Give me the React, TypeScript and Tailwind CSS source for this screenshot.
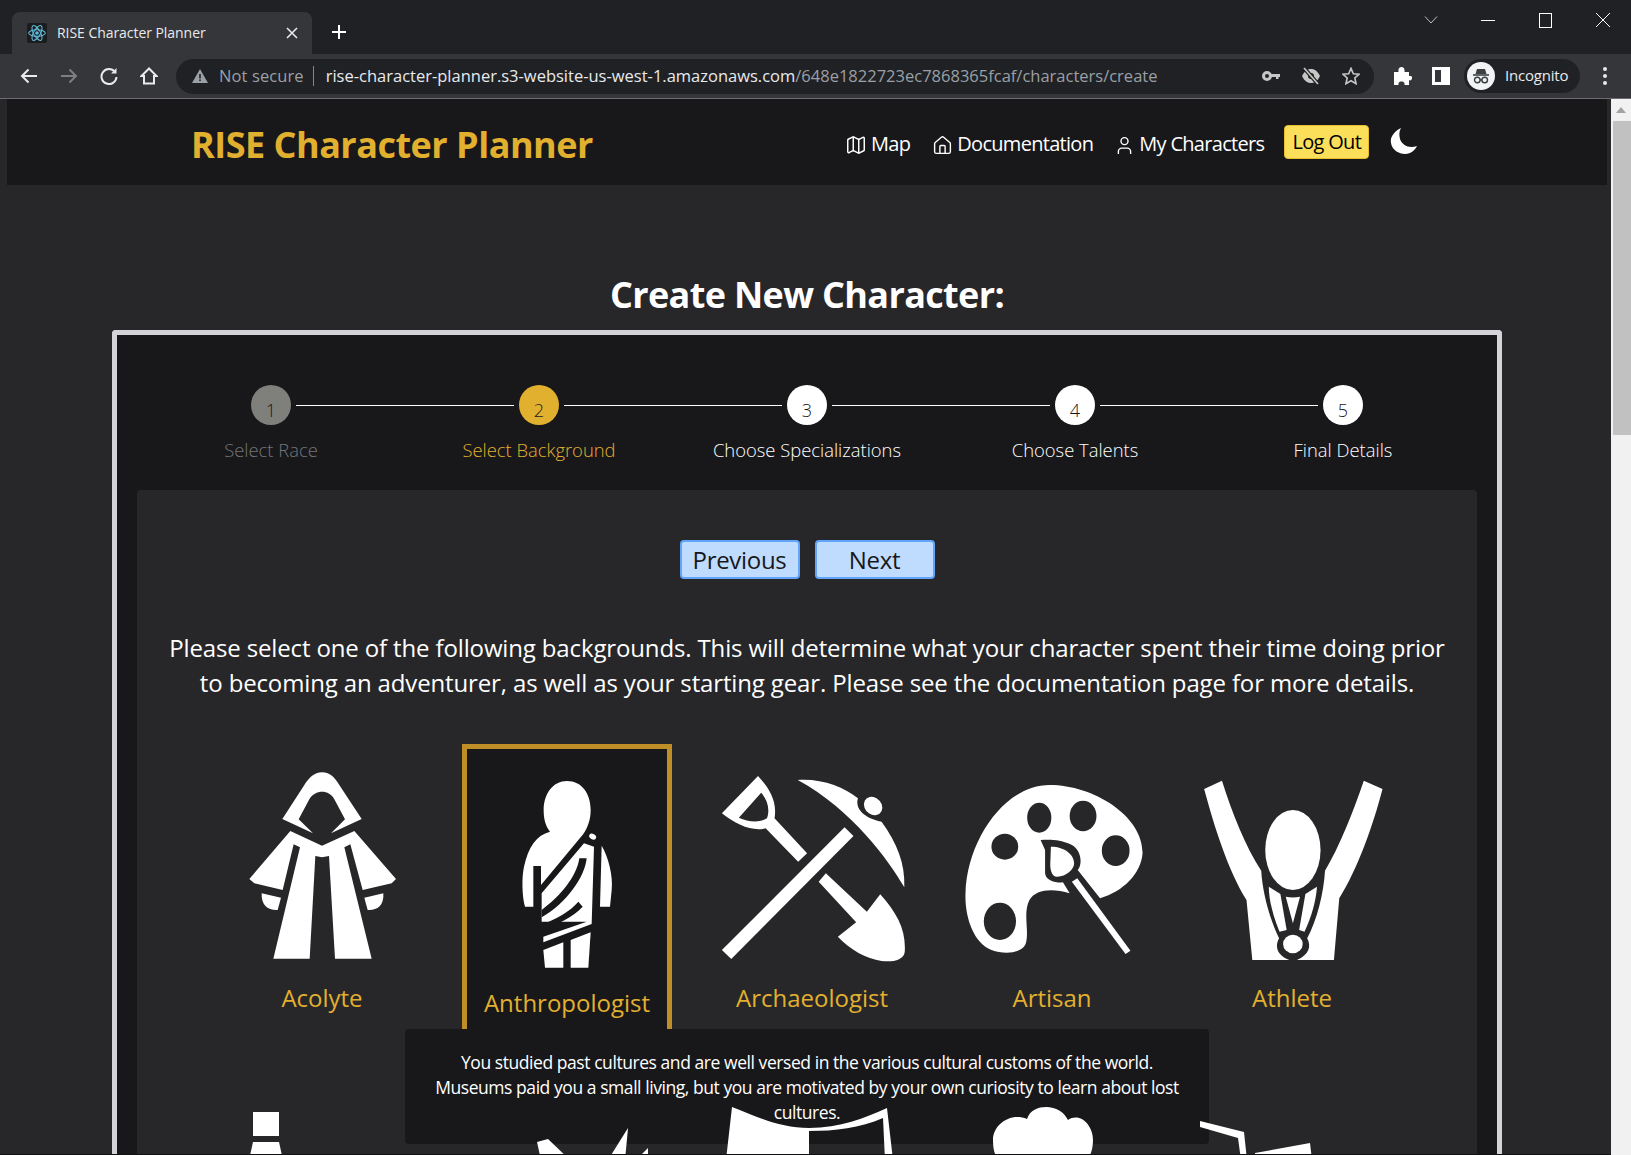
import { House, Map, User } from "lucide-react";

function TabStrip() {
  return (
    <div className="h-[54px] bg-[#202124] flex items-end pl-3 relative shrink-0">
      <div className="w-[300px] h-[42px] bg-[#35363a] rounded-t-lg flex items-center pl-[15px] pr-[14px] pb-[1px]">
        <div className="w-5 h-5 bg-[#1b1c1e] rounded-[2px] flex items-center justify-center">
          <svg viewBox="-12 -12 24 24" className="w-5 h-5" fill="none" stroke="#61b8d6" strokeWidth="1.3">
            <circle r="2.2" fill="#61b8d6" stroke="none" />
            <ellipse rx="10" ry="4" />
            <ellipse rx="10" ry="4" transform="rotate(60)" />
            <ellipse rx="10" ry="4" transform="rotate(120)" />
          </svg>
        </div>
        <span className="ml-[10px] text-[14px] tracking-[-0.05px] text-[#e8eaed] flex-1 whitespace-nowrap">RISE Character Planner</span>
        <svg viewBox="0 0 12 12" className="w-3 h-3" stroke="#e8eaed" strokeWidth="1.6">
          <path d="M1 1 L11 11 M11 1 L1 11" />
        </svg>
      </div>
      <svg viewBox="0 0 16 16" className="w-4 h-4 ml-[19px] mb-[14px]" stroke="#ffffff" strokeWidth="2">
        <path d="M8 1 V15 M1 8 H15" />
      </svg>
      <div className="ml-auto self-start flex items-center h-10 pr-[21px]">
        <svg viewBox="0 0 14 8" className="w-[14px] h-2" fill="none" stroke="#bdc1c6" strokeWidth="1">
          <path d="M1 .5 L7 7 L13 .5" />
        </svg>
        <div className="w-[14px] h-px bg-white ml-[43px]" />
        <div className="w-[13px] h-[15px] border border-white ml-[44px]" />
        <svg viewBox="0 0 14 14" className="w-[14px] h-[14px] ml-[44px]" stroke="#ffffff" strokeWidth="1">
          <path d="M0 0 L14 14 M14 0 L0 14" />
        </svg>
      </div>
    </div>
  );
}

function ToolBar() {
  return (
    <div className="h-[45px] bg-[#35363a] border-b border-[#6b6c70] flex items-center pl-[20px] shrink-0">
      <svg viewBox="0 0 18 16" className="w-[18px] h-4" fill="none" stroke="#e8eaed" strokeWidth="2">
        <path d="M17 8 H2 M8.500 1.500 L2 8 L8.500 14.500" />
      </svg>
      <svg viewBox="0 0 18 16" className="w-[18px] h-4 ml-[22px]" fill="none" stroke="#7d7f83" strokeWidth="2">
        <path d="M1 8 H16 M9.500 1.500 L16 8 L9.500 14.500" />
      </svg>
      <svg viewBox="0 0 18 18" className="w-[18px] h-[18px] ml-[22px]" fill="none" stroke="#e8eaed" strokeWidth="2">
        <path d="M15 5 A7.500 7.500 0 1 0 16.500 10" />
        <path d="M16.500 1 V6.500 H11" fill="#e8eaed" stroke="none" />
      </svg>
      <svg viewBox="0 0 18 18" className="w-[18px] h-[18px] ml-[22px]" fill="none" stroke="#e8eaed" strokeWidth="2">
        <path d="M9 1.500 L1.500 9 H4 V16.500 H14 V9 H16.500 Z" />
      </svg>
      <div className="ml-[18px] w-[1198px] h-[35px] rounded-full bg-[#202124] flex items-center pl-[16px] pr-[14px]">
        <svg viewBox="0 0 16 14" className="w-4 h-[14px]" fill="#9aa0a6">
          <path d="M8 0 L16 14 H0 Z" />
          <path d="M7.200 5 H8.800 V9.500 H7.200 Z M7.200 10.500 H8.800 V12 H7.200 Z" fill="#202124" />
        </svg>
        <span className="ml-[11px] text-[16.500px] text-[#9aa0a6] tracking-[0.1px] whitespace-nowrap">Not secure</span>
        <div className="w-px h-5 bg-[#80868b] ml-[9px]" />
        <span className="ml-[12px] text-[16.500px] tracking-[0px] text-[#e8eaed] whitespace-nowrap">
          rise-character-planner.s3-website-us-west-1.amazonaws.com
          <span className="text-[#9aa0a6]">/648e1822723ec7868365fcaf/characters/create</span>
        </span>
        <svg viewBox="0 0 18 10" className="w-[18px] h-[10px] ml-auto" fill="#c4c7c5">
          <path d="M5 0 A5 5 0 1 1 5 10 A5 5 0 0 1 5 0 Z M5 3 A2 2 0 1 0 5 7 A2 2 0 0 0 5 3 Z" fillRule="evenodd" />
          <path d="M9 3 H18 V6 H16.500 V8 H14 V6 H9 Z" />
        </svg>
        <svg viewBox="0 0 20 18" className="w-5 h-[18px] ml-[21px]">
          <path d="M1 9 C4 3 7 2 10 2 C13 2 16 3 19 9 C16 15 13 16 10 16 C7 16 4 15 1 9 Z" fill="#c4c7c5" />
          <circle cx="10" cy="9" r="3" fill="#202124" />
          <path d="M3 1 L17 17" stroke="#202124" strokeWidth="4" />
          <path d="M3 1 L17 17" stroke="#c4c7c5" strokeWidth="1.700" />
        </svg>
        <svg viewBox="0 0 20 20" className="w-[18px] h-[18px] ml-[21px]" fill="none" stroke="#c4c7c5" strokeWidth="1.800">
          <path d="M10 1.500 L12.600 7.500 L19 8 L14.200 12.200 L15.600 18.500 L10 15.200 L4.400 18.500 L5.800 12.200 L1 8 L7.400 7.500 Z" />
        </svg>
      </div>
      <svg viewBox="0 0 20 20" className="w-5 h-5 ml-[18px]" fill="#ffffff">
        <path d="M2 6 H6.500 C6 2 8 1 9.500 1 C11 1 13 2 12.500 6 H17 V10 C20 9.500 20.500 11 20 12.500 C19.500 14.500 18 15 17 14 V19 H12.500 C13 16 11 15.500 9.500 15.500 C8 15.500 6 16 6.500 19 H2 V14 Z" />
      </svg>
      <div className="w-[18px] h-[18px] ml-[20px] border-[3px] border-white bg-[#35363a] flex justify-end">
        <div className="w-[6px] bg-white" />
      </div>
      <div className="ml-[14px] w-[116px] h-[34px] rounded-full bg-[#202124] flex items-center pl-[3px]">
        <div className="w-[28px] h-[28px] rounded-full bg-[#f1f3f4] flex items-center justify-center">
          <svg viewBox="0 0 20 20" className="w-5 h-5" fill="none" stroke="#3c4043" strokeWidth="1.400">
            <path d="M6 3 H14 L15.500 8 H4.500 Z" fill="#3c4043" stroke="none" />
            <path d="M2 9 H18" strokeWidth="1.600" />
            <circle cx="6.300" cy="14" r="2.800" />
            <circle cx="13.700" cy="14" r="2.800" />
            <path d="M9 14 H11" />
          </svg>
        </div>
        <span className="ml-[10px] mb-[1px] text-[15px] tracking-[-0.2px] text-[#e8eaed]">Incognito</span>
      </div>
      <div className="ml-[23px] flex flex-col gap-[3px]">
        <div className="w-1 h-1 rounded-full bg-[#e8eaed]" />
        <div className="w-1 h-1 rounded-full bg-[#e8eaed]" />
        <div className="w-1 h-1 rounded-full bg-[#e8eaed]" />
      </div>
    </div>
  );
}

function NavBar() {
  return (
    <div className="h-[86px] bg-[#18181b] flex items-center pl-[186px] text-white">
      <div className="pt-[5px] -ml-[2px] text-[36px] font-bold tracking-[-0.5px] text-[#e2b02f] whitespace-nowrap w-[654px]">RISE Character Planner</div>
      <div className="flex items-center pt-[3px] text-[20px] tracking-[-0.7px]">
        <Map size={22} strokeWidth={1.6} className="mt-[3px]" />
        <span className="ml-[4px]">Map</span>
        <House size={21} strokeWidth={1.6} className="ml-[22px] mt-[3px]" />
        <span className="ml-[4px]">Documentation</span>
        <User size={21} strokeWidth={1.6} className="ml-[21px] mt-[3px]" />
        <span className="ml-[4px]">My Characters</span>
        <button className="ml-[20px] h-[34px] w-[85px] rounded-[4px] bg-[#fbdf5b] border border-[#e8bd2e] text-black -mt-[3px]">Log Out</button>
        <svg viewBox="0 0 28 26" className="w-[28px] h-[26px] ml-[21px] mb-[6px]" fill="#ffffff">
          <path d="M11 0 C3 4 0 10 1 15 C2 22 9 26 15 26 C21 26 25 22 27 18 C19 21 12 17 10 11 C9 7 9 3 11 0 Z" />
        </svg>
      </div>
    </div>
  );
}

const steps = [
  { n: 1, label: "Select Race", circle: "bg-[#7f807c]", text: "text-[#74747a]" },
  { n: 2, label: "Select Background", circle: "bg-[#e2b02f]", text: "text-[#e2b02f]" },
  { n: 3, label: "Choose Specializations", circle: "bg-white", text: "text-white" },
  { n: 4, label: "Choose Talents", circle: "bg-white", text: "text-white" },
  { n: 5, label: "Final Details", circle: "bg-white", text: "text-white" },
];

function Stepper() {
  return (
    <div className="flex pl-[20px] pt-[50px] h-[155px]">
      {steps.map((s, i) => (
        <div key={s.n} className="w-[268px] relative flex flex-col items-center">
          <div className={`w-10 h-10 rounded-full flex items-center justify-center pt-[10px] text-[18px] font-light text-[#18181b] ${s.circle}`}>{s.n}</div>
          {i < 4 && <div className="absolute left-[159px] top-[20px] w-[218px] h-px bg-white" />}
          <div className={`mt-[11px] text-[18.400px] font-light whitespace-nowrap ${s.text}`}>{s.label}</div>
        </div>
      ))}
    </div>
  );
}

function Acolyte() {
  return (
    <svg viewBox="18 111 570 585" preserveAspectRatio="none" className="w-[190px] h-[195px]" fill="#ffffff">
      <path d="M303 127 C328 127 343 145 355 165 L422 267 L330 310 L372 268 L340 208 C325 178 282 178 265 208 L233 268 L276 310 L184 267 L250 165 C262 145 280 127 303 127 Z" />
      <path d="M208 303 L303 347 L400 303 L525 447 L512 460 L425 480 L388 343 L370 352 L452 686 L342 686 L324 378 L303 382 L283 378 L266 686 L157 686 L237 352 L218 343 L185 480 L100 460 L85 447 Z" />
      <path d="M122 490 L180 503 L170 540 C145 542 120 530 122 490 Z" />
      <path d="M487 490 L430 503 L440 540 C465 542 490 530 487 490 Z" />
    </svg>
  );
}

function Anthropologist() {
  return (
    <svg viewBox="741 57 600 660" className="w-[200px] h-[220px]" fill="#ffffff">
      <path d="M1041 153 C1085 153 1112 190 1112 240 C1112 270 1102 295 1090 312 L963 465 L963 408 L940 408 L940 530 L915 530 C906 500 905 440 912 410 C925 350 950 315 990 305 C975 285 971 265 971 240 C971 190 1000 153 1041 153 Z" />
      <path d="M1092 340 L1122 350 L1115 582 L970 637 L970 620 L1100 575 L965 575 L965 490 Z" />
      <path d="M1078 385 L1100 385 C1095 440 1040 520 965 562 L965 540 C1020 500 1070 440 1078 385 Z" fill="#18181b" />
      <path d="M1075 515 L1088 530 C1060 560 1010 585 968 598 L965 585 C1010 565 1050 545 1075 515 Z" fill="#18181b" />
      <path d="M970 660 L1030 637 L1030 713 L975 713 Z" />
      <path d="M1052 630 L1112 607 L1105 713 L1052 713 Z" />
      <path d="M1145 347 C1165 380 1180 440 1175 480 L1170 530 L1140 530 Z" />
      <ellipse cx="1118" cy="320" rx="11" ry="8" transform="rotate(30 1118 320)" />
    </svg>
  );
}

function Archaeologist() {
  return (
    <svg viewBox="36 51 426 585" preserveAspectRatio="none" className="w-[190px] h-[195px]" fill="#ffffff">
      <path fillRule="evenodd" d="M128 78 C150 110 172 150 165 205 L238 310 L218 335 L145 235 C115 245 80 225 47 190 Z M135 128 L85 203 C105 215 130 220 148 205 C155 180 150 150 135 128 Z" />
      <path d="M280 370 L372 485 L402 433 C440 490 460 540 457 605 C455 630 430 637 405 633 C370 625 335 600 307 560 L348 517 L264 395 Z" />
      <path d="M322 232 L342 258 L68 627 L47 600 Z" />
      <path d="M217 90 C270 85 320 110 352 145 C345 175 365 205 405 215 C440 280 458 340 456 412 C420 330 340 180 217 90 Z" />
      <ellipse cx="386" cy="168" rx="20" ry="28" transform="rotate(-15 386 168)" />
    </svg>
  );
}

function Artisan() {
  return (
    <svg viewBox="573 51 425 585" preserveAspectRatio="none" className="w-[190px] h-[195px]" fill="#ffffff">
      <path d="M780 105 C880 105 990 200 988 310 C985 370 945 425 893 445 L843 360 C855 340 850 300 830 285 C805 268 780 268 760 270 L770 300 L770 370 C772 395 800 400 810 397 L825 430 C790 415 750 415 735 450 C720 490 735 540 727 580 C720 610 680 615 650 600 C610 580 590 500 592 430 C595 270 680 105 780 105 Z" />
      <g fill="#27272a">
        <ellipse cx="757" cy="203" rx="27" ry="45" />
        <ellipse cx="855" cy="198" rx="30" ry="46" />
        <ellipse cx="680" cy="290" rx="30" ry="39" />
        <ellipse cx="928" cy="302" rx="31" ry="46" />
        <ellipse cx="669" cy="514" rx="36" ry="56" />
      </g>
      <path d="M783 290 C815 290 835 315 835 340 C835 360 815 382 795 380 C785 378 780 360 782 330 Z" />
      <path d="M830 395 L842 385 L961 602 L950 612 Z" />
    </svg>
  );
}

function Athlete() {
  return (
    <svg viewBox="1111 51 426 585" preserveAspectRatio="none" className="w-[190px] h-[195px]" fill="#ffffff">
      <path d="M1127 117 L1167 92 C1190 190 1220 290 1255 362 C1258 430 1275 510 1295 565 C1285 590 1290 615 1318 630 L1235 630 L1222 450 C1180 360 1150 230 1127 117 Z" />
      <path d="M1527 117 L1485 92 C1460 190 1430 290 1398 362 C1395 430 1380 510 1358 565 C1368 590 1362 615 1335 630 L1418 630 L1430 445 C1470 360 1505 230 1527 117 Z" />
      <ellipse cx="1326" cy="300" rx="62" ry="120" />
      <path d="M1310 440 C1320 443 1332 443 1342 440 L1326 520 Z" />
      <path d="M1272 410 L1298 432 L1312 540 L1296 545 C1282 500 1272 450 1272 410 Z" />
      <path d="M1380 410 L1354 432 L1340 540 L1352 545 C1368 500 1378 450 1380 410 Z" />
      <ellipse cx="1326" cy="582" rx="22" ry="28" />
    </svg>
  );
}

function Backgrounds() {
  const label = "text-[24px] text-[#e2b02f] whitespace-nowrap";
  return (
    <div className="mt-[44px] h-[356px] flex justify-center">
      <div className="w-[240px] pt-[23px] flex flex-col items-center">
        <Acolyte />
        <div className={`mt-[18px] leading-9 ${label}`}>Acolyte</div>
      </div>
      <div className="w-[250px] flex justify-center">
        <div className="w-[210px] h-[310px] border-[5px] border-[#c08e26] bg-[#18181b] flex flex-col items-center">
          <Anthropologist />
          <div className={`mt-[16px] leading-9 ${label}`}>Anthropologist</div>
        </div>
      </div>
      <div className="w-[240px] pt-[23px] flex flex-col items-center">
        <Archaeologist />
        <div className={`mt-[18px] leading-9 ${label}`}>Archaeologist</div>
      </div>
      <div className="w-[240px] pt-[23px] flex flex-col items-center">
        <Artisan />
        <div className={`mt-[18px] leading-9 ${label}`}>Artisan</div>
      </div>
      <div className="w-[240px] pt-[23px] flex flex-col items-center">
        <Athlete />
        <div className={`mt-[18px] leading-9 ${label}`}>Athlete</div>
      </div>
    </div>
  );
}

// second row is cut off by the window, only the tops of the icons show
function SecondRow() {
  return (
    <div className="flex justify-center relative z-20">
      <div className="w-[240px] flex justify-center">
        <svg viewBox="232 1100 190 195" className="w-[190px] h-[195px]" fill="#ffffff">
          <path d="M253 1112 H279 V1136 H253 Z" />
          <path d="M253 1142 H279 L283 1160 H249 Z" />
        </svg>
      </div>
      <div className="w-[240px] flex justify-center">
        <svg viewBox="472 1100 190 195" className="w-[190px] h-[195px]" fill="#ffffff">
          <path d="M537 1142 L548 1139 L570 1160 L541 1160 Z" />
          <path d="M628 1128 L608 1160 L625 1160 Z" />
          <path d="M636 1160 L648 1148 L648 1160 Z" />
        </svg>
      </div>
      <div className="w-[240px] flex justify-center">
        <svg viewBox="712 1100 190 195" className="w-[190px] h-[195px]" fill="#ffffff">
          <path d="M732 1107 C755 1116 780 1128 809 1128 C840 1128 865 1118 887 1108 L893 1160 L885 1160 L883 1118 C860 1128 835 1131 809 1131 L809 1160 L726 1160 Z" />
        </svg>
      </div>
      <div className="w-[240px] flex justify-center">
        <svg viewBox="952 1100 190 195" className="w-[190px] h-[195px]" fill="#ffffff">
          <path d="M1027 1119 C1030 1110 1038 1107 1046 1107 C1056 1107 1064 1112 1068 1120 C1080 1112 1093 1125 1093 1140 C1093 1150 1090 1155 1088 1160 L998 1160 C995 1155 993 1150 993 1140 C993 1125 1010 1112 1027 1119 Z" />
        </svg>
      </div>
      <div className="w-[240px] flex justify-center">
        <svg viewBox="1192 1100 190 195" className="w-[190px] h-[195px]" fill="#ffffff">
          <path d="M1200 1121 L1244 1132 L1247 1160 L1241 1160 L1238 1138 L1200 1127 Z" />
          <path d="M1255 1153 L1310 1143 L1312 1160 L1255 1160 Z" />
        </svg>
      </div>
    </div>
  );
}

function Panel() {
  return (
    <div className="mt-0 mx-[20px] bg-[#27272a] rounded-t-[4px] pt-[50px] relative h-[700px]">
      <div className="flex justify-center gap-[15px] text-[24px] text-[#18181b]">
        <button className="w-[120px] h-[39px] rounded-[4px] bg-[#bfdbfe] border-2 border-[#60a5fa] tracking-[-0.3px]">Previous</button>
        <button className="w-[120px] h-[39px] rounded-[4px] bg-[#bfdbfe] border-2 border-[#60a5fa] tracking-[-0.3px]">Next</button>
      </div>
      <p className="mt-[52px] text-[24px] leading-[34.700px] tracking-[-0.14px] text-white text-center whitespace-nowrap">
        Please select one of the following backgrounds. This will determine what your character spent their time doing prior
        <br />
        to becoming an adventurer, as well as your starting gear. Please see the documentation page for more details.
      </p>
      <Backgrounds />
      <SecondRow />
      <div className="absolute z-10 left-[268px] top-[539px] w-[804px] h-[115px] bg-[#18181b] rounded-[4px] pt-[21px] text-center text-[17.500px] leading-[25px] tracking-[-0.44px] text-white whitespace-nowrap">
        You studied past cultures and are well versed in the various cultural customs of the world.
        <br />
        Museums paid you a small living, but you are motivated by your own curiosity to learn about lost
        <br />
        cultures.
      </div>
    </div>
  );
}

function Scrollbar() {
  return (
    <div className="w-5 bg-[#f1f1f1] shrink-0 flex flex-col items-end">
      <div className="w-full h-[22px] flex items-center justify-center">
        <div className="w-0 h-0 border-x-[5px] border-x-transparent border-b-[6px] border-b-[#a3a3a3]" />
      </div>
      <div className="w-[18px] h-[314px] bg-[#c1c1c1]" />
    </div>
  );
}

export default function App() {
  return (
    <div className="h-[1155px] w-[1631px] overflow-hidden flex flex-col bg-[#27272a] font-['Open_Sans',sans-serif]">
      <TabStrip />
      <ToolBar />
      <div className="flex flex-1 min-h-0">
        <div className="flex-1 min-w-0 overflow-hidden pl-[7px] pr-[4px] border-b border-[#111113]">
          <NavBar />
          <h1 className="mt-[85px] text-center text-[36px] leading-[50px] font-bold tracking-[-0.65px] text-white">Create New Character:</h1>
          <div className="mt-[10px] mx-[105px] w-[1390px] border-[5px] border-b-0 border-[#d4d4d8] rounded-t-[4px] bg-[#18181b]">
            <Stepper />
            <Panel />
          </div>
        </div>
        <Scrollbar />
      </div>
    </div>
  );
}
